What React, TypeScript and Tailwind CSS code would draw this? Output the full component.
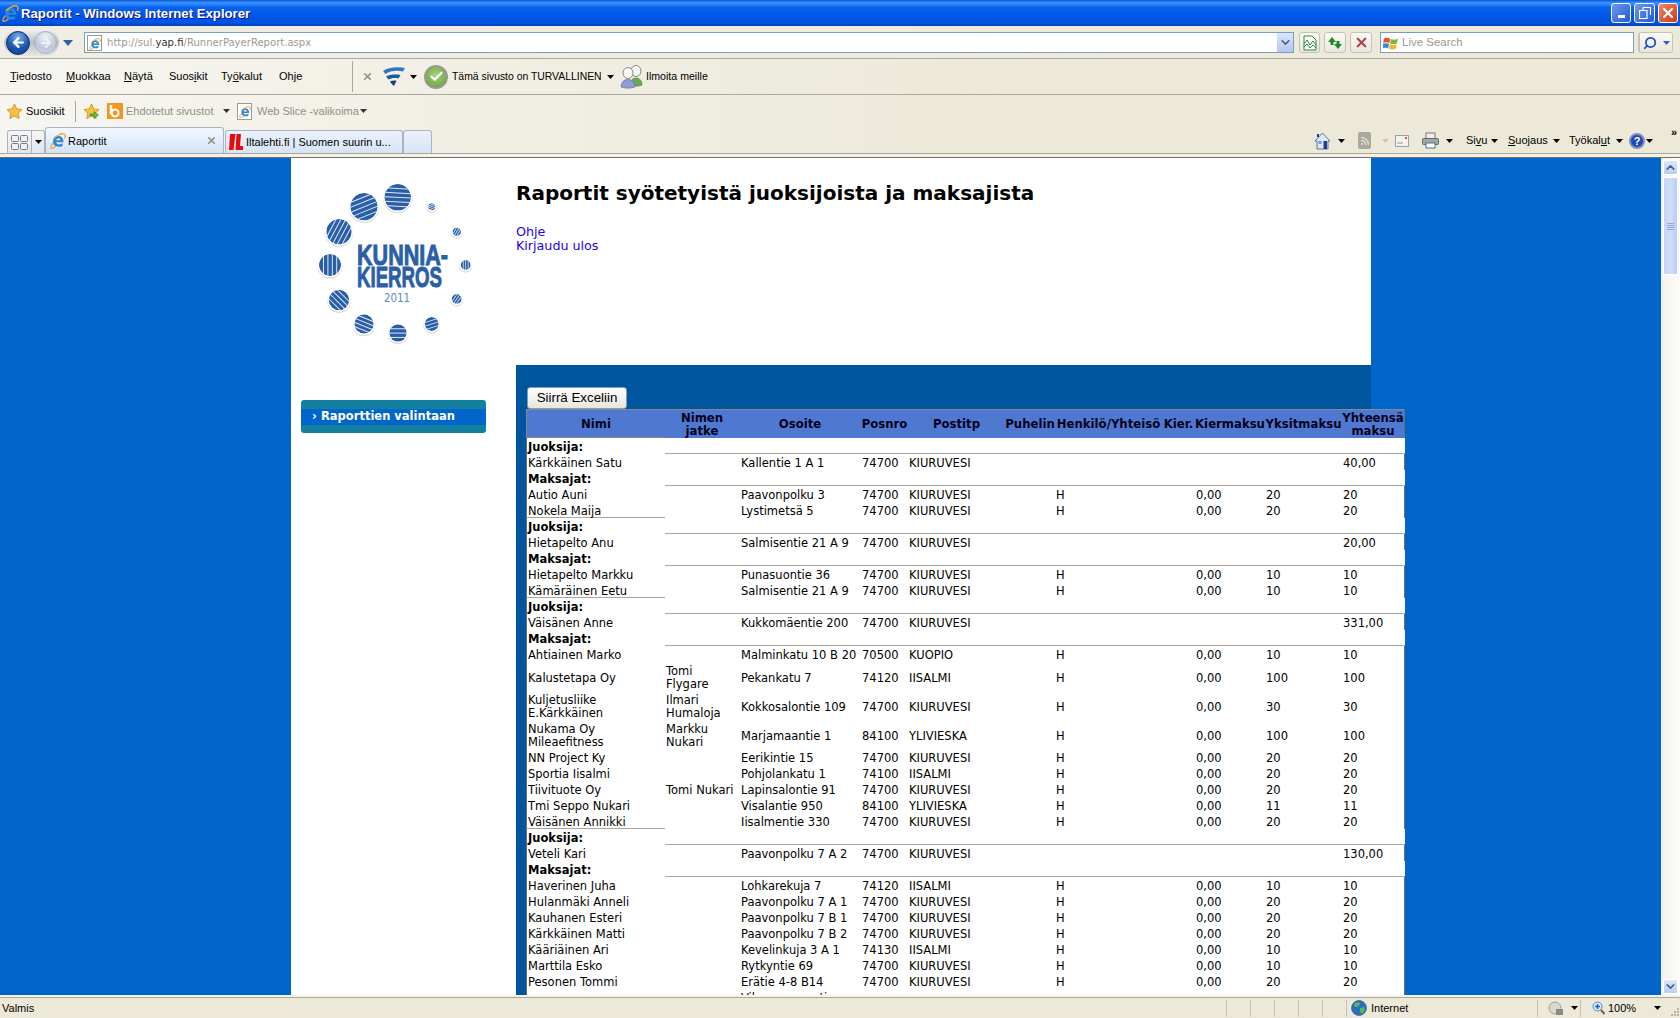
import React from "react";
import { ArrowLeft, ArrowRight, Check, Search, X, ChevronDown, ChevronUp, Rss } from "lucide-react";

type Row = { k: "h"; label: string } | { k: "d"; n: React.ReactNode; j?: React.ReactNode; a: React.ReactNode; p: string; c: string; t?: string; y?: string; sum: string; last?: boolean };

const KV = "KIURUVESI";
const IS = "IISALMI";
const YL = "YLIVIESKA";
const br = (a: string, b: string) => (<>{a}<br />{b}</>);

const rows: Row[] = [
  { k: "h", label: "Juoksija:" },
  { k: "d", n: "Kärkkäinen Satu", a: "Kallentie 1 A 1", p: "74700", c: KV, sum: "40,00" },
  { k: "h", label: "Maksajat:" },
  { k: "d", n: "Autio Auni", a: "Paavonpolku 3", p: "74700", c: KV, t: "0,00", y: "20", sum: "20" },
  { k: "d", n: "Nokela Maija", a: "Lystimetsä 5", p: "74700", c: KV, t: "0,00", y: "20", sum: "20", last: true },
  { k: "h", label: "Juoksija:" },
  { k: "d", n: "Hietapelto Anu", a: "Salmisentie 21 A 9", p: "74700", c: KV, sum: "20,00" },
  { k: "h", label: "Maksajat:" },
  { k: "d", n: "Hietapelto Markku", a: "Punasuontie 36", p: "74700", c: KV, t: "0,00", y: "10", sum: "10" },
  { k: "d", n: "Kämäräinen Eetu", a: "Salmisentie 21 A 9", p: "74700", c: KV, t: "0,00", y: "10", sum: "10", last: true },
  { k: "h", label: "Juoksija:" },
  { k: "d", n: "Väisänen Anne", a: "Kukkomäentie 200", p: "74700", c: KV, sum: "331,00" },
  { k: "h", label: "Maksajat:" },
  { k: "d", n: "Ahtiainen Marko", a: "Malminkatu 10 B 20", p: "70500", c: "KUOPIO", t: "0,00", y: "10", sum: "10" },
  { k: "d", n: "Kalustetapa Oy", j: br("Tomi", "Flygare"), a: "Pekankatu 7", p: "74120", c: IS, t: "0,00", y: "100", sum: "100" },
  { k: "d", n: br("Kuljetusliike", "E.Kärkkäinen"), j: br("Ilmari", "Humaloja"), a: "Kokkosalontie 109", p: "74700", c: KV, t: "0,00", y: "30", sum: "30" },
  { k: "d", n: br("Nukama Oy", "Mileaefitness"), j: br("Markku", "Nukari"), a: "Marjamaantie 1", p: "84100", c: YL, t: "0,00", y: "100", sum: "100" },
  { k: "d", n: "NN Project Ky", a: "Eerikintie 15", p: "74700", c: KV, t: "0,00", y: "20", sum: "20" },
  { k: "d", n: "Sportia Iisalmi", a: "Pohjolankatu 1", p: "74100", c: IS, t: "0,00", y: "20", sum: "20" },
  { k: "d", n: "Tiivituote Oy", j: "Tomi Nukari", a: "Lapinsalontie 91", p: "74700", c: KV, t: "0,00", y: "20", sum: "20" },
  { k: "d", n: "Tmi Seppo Nukari", a: "Visalantie 950", p: "84100", c: YL, t: "0,00", y: "11", sum: "11" },
  { k: "d", n: "Väisänen Annikki", a: "Iisalmentie 330", p: "74700", c: KV, t: "0,00", y: "20", sum: "20", last: true },
  { k: "h", label: "Juoksija:" },
  { k: "d", n: "Veteli Kari", a: "Paavonpolku 7 A 2", p: "74700", c: KV, sum: "130,00" },
  { k: "h", label: "Maksajat:" },
  { k: "d", n: "Haverinen Juha", a: "Lohkarekuja 7", p: "74120", c: IS, t: "0,00", y: "10", sum: "10" },
  { k: "d", n: "Hulanmäki Anneli", a: "Paavonpolku 7 A 1", p: "74700", c: KV, t: "0,00", y: "20", sum: "20" },
  { k: "d", n: "Kauhanen Esteri", a: "Paavonpolku 7 B 1", p: "74700", c: KV, t: "0,00", y: "20", sum: "20" },
  { k: "d", n: "Kärkkäinen Matti", a: "Paavonpolku 7 B 2", p: "74700", c: KV, t: "0,00", y: "20", sum: "20" },
  { k: "d", n: "Kääriäinen Ari", a: "Kevelinkuja 3 A 1", p: "74130", c: IS, t: "0,00", y: "10", sum: "10" },
  { k: "d", n: "Marttila Esko", a: "Rytkyntie 69", p: "74700", c: KV, t: "0,00", y: "10", sum: "10" },
  { k: "d", n: "Pesonen Tommi", a: "Erätie 4-8 B14", p: "74700", c: KV, t: "0,00", y: "20", sum: "20" },
  { k: "d", n: "", a: br("Vilmansaarentie", "1"), p: "", c: "", sum: "" },
];

const Caret = ({ c = "#000", className = "" }: { c?: string; className?: string }) => (
  <svg width="7" height="4" viewBox="0 0 7 4" className={"shrink-0 " + className}><path d="M0 0h7L3.5 4z" fill={c} /></svg>
);

const IeIcon = ({ s = 16 }: { s?: number }) => (
  <svg width={s} height={s} viewBox="0 0 16 16" className="shrink-0">
    <path d="M13.5 9.2H6.2c.2 2.4 3.6 2.9 6.3 1.1v2.6C8.6 14.8 3 13.6 3 8.6 3 4 7.800 2 10.800 3.500c2 1 2.700 3.200 2.700 5.700zM6.200 7.200h4.200C10.300 5 6.600 4.800 6.200 7.200z" fill="#2f86d8" />
    <path d="M3.500 5.500C6.500 2.500 11.500 0 14 1c1.500.6 1.300 2.500.5 4.500M3 10C1.500 12 .3 14 1 15c.7.8 3-.2 5-1.800" stroke="#e8a82c" strokeWidth="1.300" fill="none" />
  </svg>
);

const Star = ({ arrow }: { arrow?: boolean }) => (
  <svg width="17" height="17" viewBox="0 0 17 17" className="shrink-0">
    <path d="M8.500 1l2.300 4.900 5.200.7-3.800 3.600 1 5.300-4.700-2.600-4.700 2.600 1-5.300L1 6.600l5.200-.7z" fill="#f7c23e" stroke="#c58a1c" strokeWidth=".8" />
    {arrow && <path d="M7 11h4V8.500l4.500 3.500-4.500 3.500V13H7z" fill="#5fbf3a" stroke="#2f8a1c" strokeWidth=".6" />}
  </svg>
);

const FSecure = () => (
  <svg width="24" height="24" viewBox="0 0 24 24" className="shrink-0">
    <path d="M1 6C6 2.500 15 1.500 23 3c-1 1.500-1.500 2.500-2 3.500C14 5 8 6 3.500 9z" fill="#2f76c2" />
    <path d="M4 11.500C8 9.500 13 9 18.500 10c-.7 1.300-1.300 2.300-2 3.500-4-1-7.500-.3-10 1z" fill="#1d5aa0" />
    <path d="M8 16.500c2-1 4-1.200 6.500-.7L12 21c-1.500-1-3-2.800-4-4.500z" fill="#153f82" />
  </svg>
);

const People = () => (
  <svg width="24" height="25" viewBox="0 0 24 25" className="shrink-0">
    <ellipse cx="16" cy="7" rx="5" ry="5.500" fill="#f4f4f0" stroke="#8a8a82" />
    <path d="M10 21c0-5 3-7 6-7s6 2 6 7c-3 1.500-9 1.500-12 0z" fill="#6aa84f" stroke="#4a7a34" strokeWidth=".6" />
    <ellipse cx="8" cy="9" rx="5" ry="5.500" fill="#f7f7f3" stroke="#8a8a82" />
    <path d="M1 23c0-5 3-7.500 7-7.500s7 2.500 7 7.500c-3 1.500-11 1.500-14 0z" fill="#8f9ad8" stroke="#5a66a8" strokeWidth=".6" />
  </svg>
);

const Globe = () => (
  <svg width="16" height="16" viewBox="0 0 16 16" className="shrink-0">
    <circle cx="8" cy="8" r="7.500" fill="#2a6fc4" stroke="#24508c" strokeWidth=".6" />
    <path d="M4 3c2-1 4-1 5 0l-1 3-3 1-2-1zM9 8l4-1 1 3-3 4-2-2z" fill="#5cb84a" />
  </svg>
);

const ToolBtn = ({ className = "", children }: { className?: string; children: React.ReactNode }) => (
  <div className={"h-[21px] rounded-[3px] border border-[#c3c3ba] bg-[linear-gradient(180deg,#fbfaf6,#e9e7dc)] flex items-center justify-center shrink-0 " + className}>{children}</div>
);

function Ball({ cx, cy, r, a }: { cx: number; cy: number; r: number; a: number }) {
  const id = `b${cx}${cy}`.replace(/\./g, "_");
  const n = Math.max(3, Math.round(r / 2.7));
  const gap = (2 * r) / (n + 1);
  return (
    <g>
      <circle cx={cx} cy={cy + 1} r={r + 1.600} fill="#dcdcdc" />
      <circle cx={cx} cy={cy} r={r + 1.300} fill="#fff" />
      <clipPath id={id}><circle cx={cx} cy={cy} r={r} /></clipPath>
      <g clipPath={`url(#${id})`}>
        <circle cx={cx} cy={cy} r={r} fill="#2a5fa8" />
        <g transform={`rotate(${a} ${cx} ${cy})`}>
          {Array.from({ length: n }).map((_, i) => (
            <rect key={i} x={cx - r} y={cy - r + gap * (i + 1) - 0.4} width={2 * r} height={r > 8 ? 1 : 0.8} fill="#dfe8f5" />
          ))}
        </g>
      </g>
    </g>
  );
}

const Logo = () => (
  <svg width="225" height="200" viewBox="291 158 225 200" className="block">
    <Ball cx={397.700} cy={197.300} r={13.300} a={3} />
    <Ball cx={364} cy={206.700} r={13.700} a={-22} />
    <Ball cx={339} cy={231.700} r={12.700} a={-62} />
    <Ball cx={330} cy={265} r={11} a={-90} />
    <Ball cx={339} cy={300} r={10.300} a={45} />
    <Ball cx={364} cy={324} r={9.700} a={22} />
    <Ball cx={398} cy={333} r={8.700} a={0} />
    <Ball cx={431.700} cy={324} r={7} a={-18} />
    <Ball cx={456.700} cy={299} r={5} a={-55} />
    <Ball cx={465.700} cy={265} r={5} a={90} />
    <Ball cx={456.700} cy={231.700} r={4.300} a={-60} />
    <Ball cx={431.700} cy={206.700} r={3.500} a={-25} />
    <text x="357" y="265" fontFamily="'Liberation Sans',sans-serif" fontWeight="700" fontSize="30" fill="#2a5fa8" stroke="#2a5fa8" strokeWidth="1" textLength="91" lengthAdjust="spacingAndGlyphs">KUNNIA-</text>
    <text x="357" y="287" fontFamily="'Liberation Sans',sans-serif" fontWeight="700" fontSize="30" fill="#2a5fa8" stroke="#2a5fa8" strokeWidth="1" textLength="85" lengthAdjust="spacingAndGlyphs">KIERROS</text>
    <text x="384" y="302" fontFamily="'DejaVu Sans',sans-serif" fontSize="13" fill="#5f86bb" textLength="26" lengthAdjust="spacingAndGlyphs">2011</text>
  </svg>
);

function TitleBar() {
  return (
    <div className="h-[26px] shrink-0 flex items-center bg-[linear-gradient(180deg,#0a58dc_0,#3d95ff_3px,#0a64ee_7px,#0056e6_60%,#0054e3_88%,#0042b4_100%)]">
      <div className="ml-[2px]"><IeIcon s={17} /></div>
      <span className="ml-[2px] mt-[1px] w-[1590px] text-white font-bold text-[13.200px] font-['Liberation_Sans',sans-serif] [text-shadow:1px_1px_#0f1089]">Raportit - Windows Internet Explorer</span>
      <div className="absolute right-[2px] top-[3px] flex gap-[3px]">
        <div className="w-[20px] h-[20px] rounded-[3px] border border-white bg-[linear-gradient(135deg,#6d9bf0,#2457d8)] flex items-end pl-[6px] pb-[4px]"><div className="w-[7px] h-[3px] bg-white" /></div>
        <div className="w-[21px] h-[20px] rounded-[3px] border border-white bg-[linear-gradient(135deg,#6d9bf0,#2457d8)] flex items-center justify-center">
          <svg width="12" height="12" viewBox="0 0 12 12"><path d="M4 .5h7.500V8M4 .5V3M.5 3.500h7.500V11.500H.5z" fill="none" stroke="#fff" strokeWidth="1.200" /></svg>
        </div>
        <div className="w-[20px] h-[20px] rounded-[3px] border border-white bg-[linear-gradient(135deg,#ee8a6a,#cc3a12)] flex items-center justify-center"><X size={16} strokeWidth={3} color="#fff" /></div>
      </div>
    </div>
  );
}

function AddressBar() {
  return (
    <div className="h-[32px] shrink-0 flex items-center pt-[1px] bg-[linear-gradient(90deg,#f0eee4,#ece9d8)]">
      <div className="ml-[4px] w-[55px] h-[27px] rounded-full bg-[linear-gradient(180deg,#f4f4f4,#bdbdbd_50%,#e6e6e6)] flex items-center shrink-0">
        <div className="ml-[2px] w-[24px] h-[24px] rounded-full border border-[#0d2f6e] bg-[radial-gradient(circle_at_50%_25%,#7fb2ee,#1b57ae_55%,#0f3c8a)] flex items-center justify-center"><ArrowLeft size={15} strokeWidth={3.500} color="#fff" /></div>
        <div className="ml-[4px] w-[23px] h-[23px] rounded-full border border-[#a6aebb] bg-[radial-gradient(circle_at_50%_25%,#f0f3f8,#bcc7d8_60%,#d8dfe9)] flex items-center justify-center"><ArrowRight size={14} strokeWidth={3} color="#eef1f6" /></div>
      </div>
      <svg width="10" height="6" viewBox="0 0 10 6" className="ml-[4px] shrink-0"><path d="M0 0h10L5 6z" fill="#2b5fa3" /></svg>
      <div className="ml-[11px] w-[1210px] h-[21px] border border-[#7f9db9] bg-white flex items-center shrink-0 relative">
        <div className="ml-[2px] w-[15px] h-[16px] border border-[#9a9a9a] bg-white relative shrink-0"><div className="absolute left-[1px] top-[2px]"><IeIcon s={12} /></div></div>
        <span className="ml-[5px] mt-[1px] w-[1170px] text-[11.200px] text-[#9a9a92] font-['DejaVu_Sans_Condensed','Liberation_Sans',sans-serif]">http://sul.<span className="text-[#333]">yap.fi</span>/RunnerPayerReport.aspx</span>
        <div className="absolute right-0 top-0 w-[16px] h-[19px] bg-[linear-gradient(180deg,#dbe6fb,#b3c7f5)] flex items-center justify-center"><ChevronDown size={13} strokeWidth={3} color="#4d6185" /></div>
      </div>
      <ToolBtn className="ml-[5px] w-[21px]">
        <svg width="14" height="16" viewBox="0 0 14 16"><path d="M1 1h8l4 4v10H1z" fill="#fff" stroke="#2c8a3a" /><path d="M1 9l3-4 3 5 3-4 3 4M1 12l3-3 3 4 3-3 3 3" fill="none" stroke="#2c8a3a" /></svg>
      </ToolBtn>
      <ToolBtn className="ml-[4px] w-[22px]">
        <svg width="16" height="16" viewBox="0 0 16 16"><path d="M5 2L1 7h2.500v3h3V7H9z" fill="#1e8a2e" /><path d="M11 14l4-5h-2.500V6h-3v3H7z" fill="#1e8a2e" /></svg>
      </ToolBtn>
      <ToolBtn className="ml-[4px] w-[22px]"><X size={15} strokeWidth={3.500} color="#b0434a" /></ToolBtn>
      <div className="ml-[8px] w-[254px] h-[21px] border border-[#7f9db9] bg-white flex items-center shrink-0">
        <svg width="16" height="16" viewBox="0 0 16 16" className="ml-[2px] shrink-0"><path d="M1 3.500C3 2.500 5 2.500 7.300 3.700L6.300 8C4 7 2.500 7 .2 8z" fill="#e8532b" /><path d="M8 4C10 5 12.500 5 15 3.500L14 8c-2.500 1.500-4.500 1.500-7 .3z" fill="#7db83a" /><path d="M0 8.800C2.500 8 4 8 6.100 9L5 13.500C3 12.500 1.500 12.500-1 13.500z" fill="#2f8bd6" /><path d="M6.900 9c2.500 1.200 4.500 1.200 7 0l-1 4.500c-2.500 1.300-4.500 1.300-7 0z" fill="#f4b62f" /></svg>
        <span className="ml-[3px] mt-[1px] text-[11.500px] text-[#9a9a92] font-['Liberation_Sans',sans-serif]">Live Search</span>
      </div>
      <div className="ml-[4px] w-[35px] h-[21px] rounded-[3px] border border-[#c3c3ba] bg-[linear-gradient(180deg,#fbfaf6,#e9e7dc)] flex items-center shrink-0">
        <div className="w-[21px] h-full border-r border-[#c3c3ba] flex items-center justify-center -scale-x-100"><Search size={14} strokeWidth={3} color="#1a4fc4" /></div>
        <svg width="7" height="4" viewBox="0 0 7 4" className="ml-[3px]"><path d="M0 0h7L3.500 4z" fill="#2b5fc3" /></svg>
      </div>
    </div>
  );
}

const Mn = ({ pre, u, post, w }: { pre?: string; u: string; post?: string; w: string }) => (
  <span className={"shrink-0 " + w}>{pre}<u>{u}</u>{post}</span>
);

const chromeText = "text-[11px] font-['Liberation_Sans',sans-serif]";

function MenuBar() {
  return (
    <div className={"h-[37px] shrink-0 flex items-center border-y border-[#aca899] bg-[linear-gradient(90deg,#f6f5f0,#ece9d8_60%)] text-black pl-[10px] " + chromeText}>
      <Mn u="T" post="iedosto" w="w-[56px]" />
      <Mn u="M" post="uokkaa" w="w-[58px]" />
      <Mn u="N" post="äytä" w="w-[45px]" />
      <Mn pre="Suos" u="i" post="kit" w="w-[52px]" />
      <Mn pre="Ty" u="ö" post="kalut" w="w-[58px]" />
      <Mn pre="Oh" u="j" post="e" w="w-[73px]" />
      <div className="w-px h-[31px] bg-[#aca899] shrink-0" />
      <X size={11} strokeWidth={3.500} color="#909088" className="ml-[9px] shrink-0" />
      <div className="ml-[9px]"><FSecure /></div>
      <Caret className="ml-[4px]" />
      <div className="ml-[7px] w-[24px] h-[24px] rounded-full border-2 border-[#9a9a8e] bg-[radial-gradient(circle_at_50%_40%,#a5d37a,#5f9e34)] flex items-center justify-center shrink-0"><Check size={15} strokeWidth={3.500} color="#fff" /></div>
      <span className="ml-[4px] w-[151px] shrink-0 whitespace-nowrap text-[10.400px]">Tämä sivusto on TURVALLINEN</span>
      <Caret className="ml-[4px]" />
      <div className="ml-[6px]"><People /></div>
      <span className="ml-[2px] whitespace-nowrap text-[10.600px]">Ilmoita meille</span>
    </div>
  );
}

function FavBar() {
  return (
    <div className={"h-[32px] shrink-0 flex items-center bg-[linear-gradient(90deg,#f6f5f0,#ece9d8_60%)] pl-[6px] " + chromeText}>
      <Star />
      <span className="ml-[3px] w-[49px] shrink-0">Suosikit</span>
      <div className="w-px h-[21px] bg-[#aca899] shrink-0" />
      <div className="ml-[7px]"><Star arrow /></div>
      <svg width="16" height="16" viewBox="0 0 16 16" className="ml-[7px] shrink-0"><rect width="16" height="16" fill="#f5941f" /><path d="M4 2v9" stroke="#fff" strokeWidth="2.500" /><circle cx="8" cy="10" r="3.500" fill="none" stroke="#fff" strokeWidth="2.200" /></svg>
      <span className="ml-[3px] w-[92px] shrink-0 text-[#8f8f88] whitespace-nowrap">Ehdotetut sivustot</span>
      <Caret c="#333" className="ml-[5px]" />
      <div className="ml-[7px] w-[15px] h-[17px] border border-[#9a9a9a] bg-white relative shrink-0"><div className="absolute left-[1px] top-[2px]"><IeIcon s={12} /></div></div>
      <span className="ml-[5px] w-[98px] shrink-0 text-[#8f8f88] whitespace-nowrap">Web Slice -valikoima</span>
      <Caret c="#333" className="ml-[5px]" />
    </div>
  );
}

function TabBar() {
  return (
    <div className={"h-[26px] shrink-0 flex items-end relative bg-[linear-gradient(90deg,#f6f5f0,#ece9d8_60%)] pl-[7px] " + chromeText}>
      <div className="w-[38px] h-[23px] flex border border-b-0 border-[#a9b3c2] rounded-t-[3px] bg-[linear-gradient(180deg,#f6f6f2,#dfe6f2)] shrink-0">
        <div className="w-[24px] border-r border-[#a9b3c2] flex items-center justify-center">
          <svg width="17" height="15" viewBox="0 0 17 15"><g fill="#eef0f2" stroke="#7d7d7d"><rect x=".5" y=".5" width="7" height="6" rx="1" /><rect x="9.500" y=".5" width="7" height="6" rx="1" /><rect x=".5" y="8.500" width="7" height="6" rx="1" /><rect x="9.500" y="8.500" width="7" height="6" rx="1" /></g></svg>
        </div>
        <div className="flex-1 flex items-center justify-center"><Caret /></div>
      </div>
      <div className="w-[179px] h-[26px] flex items-center border border-b-0 border-[#a9b3c2] rounded-t-[3px] bg-[linear-gradient(180deg,#f4f8fe,#d3e2f7)] shrink-0 pl-[4px]">
        <IeIcon s={16} />
        <span className="ml-[2px] mt-[1px] w-[138px]">Raportit</span>
        <X size={11} strokeWidth={3.500} color="#909088" />
      </div>
      <div className="ml-px w-[178px] h-[23px] flex items-center border border-b-0 border-[#a9b3c2] rounded-t-[3px] bg-[linear-gradient(180deg,#eaf1fb,#d7e4f7)] shrink-0 pl-[3px] whitespace-nowrap">
        <svg width="14" height="18" viewBox="0 0 14 18" className="shrink-0"><path d="M1 1h5.500L4.500 17H0zM7.500 1H12l-1 12h3.500l-.5 4H6.500z" fill="#e60c0c" /></svg>
        <span className="ml-[3px]">Iltalehti.fi | Suomen suurin u...</span>
      </div>
      <div className="w-[29px] h-[23px] border border-b-0 border-[#a9b3c2] rounded-t-[3px] bg-[linear-gradient(180deg,#eaf1fb,#d7e4f7)] shrink-0" />
      <div className="ml-[882px] self-center mt-[1px] flex items-center shrink-0">
        <svg width="17" height="18" viewBox="0 0 17 18" className="shrink-0"><path d="M8.500 1L1 9h2v8h11V9h2z" fill="#dfe7f3" stroke="#5878a8" /><rect x="4.500" y="9" width="3" height="3" fill="#6c9ad6" /><rect x="9.500" y="9" width="3.500" height="8" fill="#1d3f92" /><path d="M3 2h2v3H3z" fill="#1d3f92" /></svg>
        <Caret className="ml-[7px]" />
        <div className="ml-[13px] w-[13px] h-[17px] rounded-[2px] bg-[#a9a9a0] flex items-center justify-center shrink-0"><Rss size={10} strokeWidth={3} color="#e8e8e0" /></div>
        <Caret c="#c8c8c0" className="ml-[11px]" />
        <svg width="14" height="12" viewBox="0 0 14 12" className="ml-[6px] shrink-0"><rect x=".5" y=".5" width="13" height="11" fill="#f2f2ee" stroke="#a0a0a0" /><path d="M2 8h6" stroke="#9a9a9a" /><rect x="10" y="2" width="2" height="2" fill="#e04a3a" /></svg>
        <svg width="17" height="17" viewBox="0 0 17 17" className="ml-[13px] shrink-0"><rect x="4" y="1" width="9" height="6" fill="#eee" stroke="#777" /><rect x=".5" y="6.500" width="16" height="6" rx="1" fill="#a4a4a0" stroke="#666" /><rect x="4" y="11" width="9" height="5" fill="#fff" stroke="#3a7f9a" /></svg>
        <Caret className="ml-[7px]" />
        <span className="ml-[13px] w-[20px] shrink-0">Si<u>v</u>u</span>
        <Caret className="ml-[5px]" />
        <span className="ml-[10px] w-[40px] shrink-0"><u>S</u>uojaus</span>
        <Caret className="ml-[5px]" />
        <span className="ml-[9px] w-[42px] shrink-0 whitespace-nowrap">Työkal<u>u</u>t</span>
        <Caret className="ml-[5px]" />
        <div className="ml-[6px] w-[16px] h-[16px] rounded-full border-2 border-[#7d8fb8] bg-[#2048b8] text-white text-[11px] font-bold leading-[12px] text-center shrink-0">?</div>
        <Caret className="ml-[1px]" />
      </div>
      <span className="absolute right-[3px] top-[-1px] text-[11px] font-bold leading-[12px]">»</span>
    </div>
  );
}

const bodyFont = "font-['DejaVu_Sans',sans-serif]";

function DataTable() {
  const hd = "font-bold text-[11.700px] text-center px-0 border-t border-[#8a8a8a] h-[29px] leading-[13px] align-middle pt-[1px]";
  const td = "h-[16px] px-[1px] pt-[3px] pb-0 leading-[13px] align-middle";
  const tdb = "h-[16px] px-[1px] pt-[3px] pb-0 leading-[12px] align-middle";
  return (
    <table className={"table-fixed w-[879px] border-separate border-spacing-0 text-[11.500px] text-black bg-white " + bodyFont}>
      <colgroup>
        <col className="w-[139px]" /><col className="w-[74px]" /><col className="w-[122px]" /><col className="w-[47px]" />
        <col className="w-[97px]" /><col className="w-[50px]" /><col className="w-[107px]" /><col className="w-[33px]" />
        <col className="w-[70px]" /><col className="w-[77px]" /><col className="w-[63px]" />
      </colgroup>
      <thead>
        <tr className="bg-[#4f79d0] text-[#02021e]">
          <th className={hd + " border-l border-b border-[#8a8a8a]"}>Nimi</th>
          <th className={hd}>Nimen<br />jatke</th>
          <th className={hd}>Osoite</th>
          <th className={hd}>Posnro</th>
          <th className={hd}>Postitp</th>
          <th className={hd}>Puhelin</th>
          <th className={hd}>Henkilö/Yhteisö</th>
          <th className={hd}>Kier.</th>
          <th className={hd}>Kiermaksu</th>
          <th className={hd}>Yksitmaksu</th>
          <th className={hd + " border-r border-r-[#716f64]"}>Yhteensä<br />maksu</th>
        </tr>
      </thead>
      <tbody>
        {rows.map((r, i) =>
          r.k === "h" ? (
            <tr key={i}>
              <td className={td + " font-bold border-l border-[#716f64]"}>{r.label}</td>
              <td colSpan={10} className={tdb + " border-b border-[#aca899]"} />
            </tr>
          ) : (
            <tr key={i}>
              <td className={(r.last ? tdb + " border-b border-b-[#aca899]" : td) + " border-l border-l-[#716f64]"}>{r.n}</td>
              <td className={td}>{r.j}</td>
              <td className={td + " pl-[2px]"}>{r.a}</td>
              <td className={td}>{r.p}</td>
              <td className={td}>{r.c}</td>
              <td className={td} />
              <td className={td}>{r.t ? "H" : ""}</td>
              <td className={td} />
              <td className={td}>{r.t}</td>
              <td className={td}>{r.y}</td>
              <td className={td + " border-r border-[#716f64]"}>{r.sum}</td>
            </tr>
          )
        )}
      </tbody>
    </table>
  );
}

function Content() {
  return (
    <div className="flex-1 min-w-0 h-full overflow-hidden bg-[#0066cc] pl-[291px]">
      <div className="w-[1080px] h-full bg-white flex">
        <div className="w-[225px] shrink-0">
          <Logo />
          <div className="ml-[10px] mt-[42px] w-[185px] h-[33px] rounded-[3px] bg-[#12809e] flex items-center">
            <div className={"w-full h-[16px] bg-[#0066cc] text-white font-bold text-[11.500px] leading-[14px] pl-[11px] pb-[1px] flex items-center " + bodyFont}>
              <span className="w-[9px]">›</span><span>Raporttien valintaan</span>
            </div>
          </div>
        </div>
        <div className="w-[855px] shrink-0">
          <h1 className="mt-[20px] h-[30px] text-[20px] leading-[30px] font-bold text-black whitespace-nowrap font-['DejaVu_Sans',sans-serif]">Raportit syötetyistä juoksijoista ja maksajista</h1>
          <div className={"mt-[17px] text-[12.700px] leading-[14px] text-[#1a00f0] h-[140px] " + bodyFont}>
            <div>Ohje</div>
            <div>Kirjaudu ulos</div>
          </div>
          <div className="h-[640px] bg-[#00559f] pt-[22px] pl-[10px]">
            <button className="ml-px block w-[100px] h-[22px] rounded-[3px] border border-[#7f9db9] bg-[linear-gradient(180deg,#ffffff,#e8e6dc)] text-[13.330px] leading-[18px] text-black font-['Liberation_Sans',sans-serif]">Siirrä Exceliin</button>
            <DataTable />
          </div>
        </div>
      </div>
    </div>
  );
}

function Scrollbar() {
  const btn = "w-[15px] h-[15px] rounded-[2px] border border-white bg-[linear-gradient(180deg,#dbe6fb,#b9cdf5)] flex items-center justify-center";
  return (
    <div className="w-[19px] h-full shrink-0 bg-[linear-gradient(90deg,#f3f1ec,#fdfdfa)] pl-[2px] pt-[2px] flex flex-col">
      <div className={btn}><ChevronUp size={13} strokeWidth={3} color="#4d6185" /></div>
      <div className="mt-[2px] w-[15px] h-[98px] rounded-[2px] border border-white bg-[linear-gradient(90deg,#c6d5f8,#d2def9,#b9cbf4)] flex flex-col items-center justify-center gap-[1px]">
        {[0, 1, 2, 3].map((i) => <div key={i} className="w-[7px] h-px bg-[#8fa8e6]" />)}
      </div>
      <div className="flex-1" />
      <div className={btn + " mb-px"}><ChevronDown size={13} strokeWidth={3} color="#4d6185" /></div>
    </div>
  );
}

function StatusBar() {
  const cell = "border-l border-[#c5c2b2] h-[17px] shrink-0";
  return (
    <div className={"h-[20px] shrink-0 flex items-center bg-[#ece9d8] pl-[2px] relative " + chromeText}>
      <span className="w-[1224px] shrink-0">Valmis</span>
      <div className={cell + " w-[24px]"} /><div className={cell + " w-[24px]"} /><div className={cell + " w-[24px]"} /><div className={cell + " w-[24px]"} /><div className={cell + " w-[24px]"} />
      <div className={cell + " pl-[4px] w-[191px] flex items-center"}><Globe /><span className="ml-[4px]">Internet</span></div>
      <div className={cell + " w-[43px] flex items-center pl-[10px]"}><svg width="15" height="15" viewBox="0 0 15 15" className="shrink-0"><circle cx="7" cy="7" r="6" fill="#d8d8d0" stroke="#a0a09a" /><rect x="8" y="8" width="7" height="6" fill="#8a8a84" /></svg><Caret className="ml-[8px]" /></div>
      <div className={cell + " flex items-center pl-[11px]"}><svg width="13" height="14" viewBox="0 0 13 14" className="shrink-0"><circle cx="5.500" cy="5.500" r="4.500" fill="#dbe9fb" stroke="#5a82b8" /><path d="M3 5.500h5M5.500 3v5" stroke="#1b62c8" strokeWidth="1.500" /><path d="M9 9l3.500 4" stroke="#8a5a2a" strokeWidth="2" /></svg><span className="ml-[3px] w-[46px]">100%</span><Caret /></div>
      <svg width="10" height="10" viewBox="0 0 10 10" className="absolute right-0 bottom-[1px]"><g fill="#b5b2a2"><rect x="7" y="1" width="2" height="2" /><rect x="4" y="4" width="2" height="2" /><rect x="7" y="4" width="2" height="2" /><rect x="1" y="7" width="2" height="2" /><rect x="4" y="7" width="2" height="2" /><rect x="7" y="7" width="2" height="2" /></g></svg>
    </div>
  );
}

export default function App() {
  return (
    <div className="w-[1680px] h-[1018px] overflow-hidden flex flex-col relative bg-[#ece9d8]">
      <TitleBar />
      <AddressBar />
      <MenuBar />
      <FavBar />
      <TabBar />
      <div className="h-[5px] shrink-0 bg-[#f3f1e9] border-t border-[#aca899] border-b border-b-[#716f64]" />
      <div className="h-[837px] shrink-0 flex overflow-hidden">
        <Content />
        <Scrollbar />
      </div>
      <div className="h-[3px] shrink-0 bg-[#f5f3ec] border-b border-[#aca899]" />
      <StatusBar />
    </div>
  );
}
